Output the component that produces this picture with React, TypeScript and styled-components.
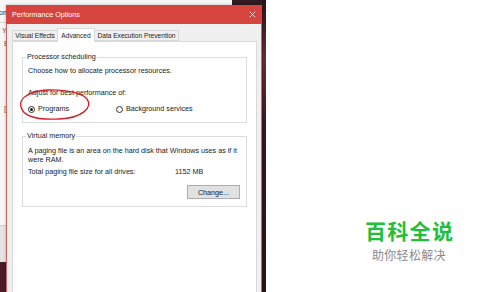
import styled, { createGlobalStyle } from 'styled-components';

const GlobalStyle = createGlobalStyle`
  html, body {
    margin: 0;
    padding: 0;
    background: #ffffff;
  }
  body {
    font-family: "Liberation Sans", Arial, sans-serif;
    -webkit-font-smoothing: antialiased;
  }
`;

const Screen = styled.div`
  display: flex;
  width: 500px;
  height: 292px;
  overflow: hidden;
  background: #ffffff;
`;

const Desktop = styled.div`
  position: relative;
  flex: 0 0 266px;
  height: 292px;
  overflow: hidden;
  background: linear-gradient(180deg, #2e1a20 0%, #5a2430 30%, #3a1820 60%, #4d1c28 100%);
`;

const BackWindow = styled.div`
  position: absolute;
  left: 0;
  top: 0;
  width: 232px;
  height: 262px;
  display: flex;
  flex-direction: column;
  background: #f7f7f7;
  font-size: 7px;
  color: #333;
`;

const BackHeader = styled.div`
  height: 23px;
  border-bottom: 1px solid #d6d6d6;
  padding: 9px 0 0 0;
  box-sizing: border-box;
  margin-left: -1px;
`;

const BackBody = styled.div`
  flex: 1;
  display: flex;
  flex-direction: column;
  gap: 5px;
  padding: 4px 0 0 2px;
  color: #555;
  font-size: 7px;
  line-height: 8px;
`;

const BackFooter = styled.div`
  height: 36px;
  background: #e4e4e4;
  border-top: 1px solid #cfcfcf;
`;

const Dialog = styled.div`
  position: absolute;
  left: 6px;
  top: 5px;
  width: 256px;
  height: 300px;
  box-sizing: border-box;
  display: flex;
  flex-direction: column;
  background: #f0f0f0;
  border: 1px solid #c96863;
  border-top: none;
  box-shadow: 0 0 3px rgba(0, 0, 0, 0.25);
`;

const TitleBar = styled.div`
  height: 19px;
  flex: 0 0 19px;
  margin: 0 -1px;
  display: flex;
  align-items: center;
  justify-content: space-between;
  padding: 0 5px 0 6px;
  background: #d5443f;
  color: #ffffff;
  font-size: 7.2px;
`;

const CloseIcon = styled.svg`
  width: 7px;
  height: 7px;
  margin-right: 1px;
`;

const DialogBody = styled.div`
  flex: 1;
  display: flex;
  flex-direction: column;
  padding: 4px 4px 0 5px;
`;

const TabRow = styled.div`
  display: flex;
  align-items: flex-end;
  height: 13px;
  position: relative;
  z-index: 1;
`;

const Tab = styled.div<{ $active?: boolean; $w: number }>`
  width: ${({ $w }) => $w}px;
  height: ${({ $active }) => ($active ? 14 : 11)}px;
  box-sizing: border-box;
  display: flex;
  align-items: center;
  justify-content: center;
  font-size: 6.6px;
  color: #1a1a1a;
  background: ${({ $active }) => ($active ? '#ffffff' : '#f0f0f0')};
  border: 1px solid #d9d9d9;
  border-bottom: ${({ $active }) => ($active ? 'none' : '1px solid #d9d9d9')};
  margin-bottom: ${({ $active }) => ($active ? -1 : 0)}px;
  & + & {
    margin-left: -1px;
  }
`;

const TabPage = styled.div`
  flex: 1;
  background: #ffffff;
  border: 1px solid #d9d9d9;
  padding: 10px 9px 0 9px;
  display: flex;
  flex-direction: column;
  gap: 8px;
`;

const GroupBox = styled.fieldset`
  margin: 0;
  padding: 0 6px 0 5px;
  border: 1px solid #dcdcdc;
  min-width: 0;
  font-size: 7.2px;
  color: #1a1a1a;
`;

const Legend = styled.legend`
  padding: 0 1px;
  margin-left: -2px;
  line-height: 10px;
  font-size: 7.2px;
  color: #1a1a1a;
`;

const Line = styled.div<{ $top?: number }>`
  line-height: 10px;
  margin-top: ${({ $top }) => $top ?? 0}px;
  white-space: nowrap;
`;

const Para = styled.div<{ $top?: number }>`
  line-height: 9px;
  margin-top: ${({ $top }) => $top ?? 0}px;
`;

const RadioRow = styled.div`
  position: relative;
  display: flex;
  align-items: center;
  height: 10px;
  margin-top: 6px;
  margin-bottom: 8px;
`;

const RadioOption = styled.label<{ $w?: number }>`
  display: flex;
  align-items: center;
  gap: 3px;
  width: ${({ $w }) => ($w ? `${$w}px` : 'auto')};
  line-height: 10px;
`;

const RadioCircle = styled.span<{ $checked?: boolean }>`
  width: 7px;
  height: 7px;
  box-sizing: border-box;
  border-radius: 50%;
  border: 1px solid #333333;
  display: flex;
  align-items: center;
  justify-content: center;
  &::after {
    content: '';
    width: 3px;
    height: 3px;
    border-radius: 50%;
    background: ${({ $checked }) => ($checked ? '#1a1a1a' : 'transparent')};
  }
`;

const Scribble = styled.svg`
  position: absolute;
  left: -11px;
  top: -15px;
  width: 80px;
  height: 34px;
  overflow: visible;
  pointer-events: none;
`;

const SizeRow = styled.div`
  display: flex;
  line-height: 10px;
  margin-top: 3px;
`;

const SizeLabel = styled.span`
  width: 147px;
`;

const ButtonRow = styled.div`
  display: flex;
  justify-content: flex-end;
  margin-top: 8px;
  margin-bottom: 7px;
`;

const Button = styled.div`
  width: 53px;
  height: 14px;
  box-sizing: border-box;
  display: flex;
  align-items: center;
  justify-content: center;
  background: #e1e1e1;
  border: 1px solid #adadad;
  font-size: 7.2px;
  color: #1a1a1a;
`;

const Edge = styled.div`
  position: absolute;
  right: 0;
  top: 0;
  width: 4px;
  height: 292px;
  background: linear-gradient(180deg, #2a1418 0%, #6b2a35 20%, #3a151c 45%, #2c1217 100%);
`;

const RightArea = styled.div`
  flex: 1;
  display: flex;
  flex-direction: column;
  padding: 219px 0 0 99px;
  background: #ffffff;
`;

const Brand = styled.div`
  font-family: "Noto Sans CJK SC", sans-serif;
  font-size: 21px;
  font-weight: 700;
  line-height: 23px;
  letter-spacing: 1.3px;
  color: #1fbf3a;
`;

const Slogan = styled.div`
  font-family: "Noto Sans CJK SC", sans-serif;
  font-size: 12px;
  line-height: 14px;
  margin-top: 6px;
  margin-left: 7px;
  letter-spacing: 0.3px;
  color: #8a8a8a;
`;

export default function App() {
  return (
    <>
      <GlobalStyle />
      <Screen>
        <Desktop>
          <BackWindow>
            <BackHeader>om</BackHeader>
            <BackBody>
              <span>Y</span>
              <span>&nbsp;E</span>
              <span>&nbsp;</span>
              <span>&nbsp;</span>
              <span>&nbsp;</span>
              <span>&nbsp;</span>
              <span>&nbsp;[</span>
            </BackBody>
            <BackFooter />
          </BackWindow>
          <Edge />
          <Dialog>
            <TitleBar>
              <span>Performance Options</span>
              <CloseIcon viewBox="0 0 10 10">
                <path d="M1 1 L9 9 M9 1 L1 9" stroke="#ffffff" strokeWidth="1.1" fill="none" />
              </CloseIcon>
            </TitleBar>
            <DialogBody>
              <TabRow>
                <Tab $w={46}>Visual Effects</Tab>
                <Tab $w={38} $active>
                  Advanced
                </Tab>
                <Tab $w={85}>Data Execution Prevention</Tab>
              </TabRow>
              <TabPage>
                <GroupBox>
                  <Legend>Processor scheduling</Legend>
                  <Line $top={4}>Choose how to allocate processor resources.</Line>
                  <Line $top={12}>Adjust for best performance of:</Line>
                  <RadioRow>
                    <RadioOption $w={88}>
                      <RadioCircle $checked />
                      Programs
                    </RadioOption>
                    <RadioOption>
                      <RadioCircle />
                      Background services
                    </RadioOption>
                    <Scribble viewBox="0 0 80 34">
                      <path
                        d="M16 3 C34 -1 62 1 70 10 C76 18 66 29 42 30 C20 31 6 27 4 18 C2 10 9 5 22 2 C26 1 30 1 33 1"
                        stroke="#d1202b"
                        strokeWidth="1.3"
                        fill="none"
                        strokeLinecap="round"
                      />
                    </Scribble>
                  </RadioRow>
                </GroupBox>
                <GroupBox>
                  <Legend>Virtual memory</Legend>
                  <Para $top={5}>
                    A paging file is an area on the hard disk that Windows uses as if it
                    <br />
                    were RAM.
                  </Para>
                  <SizeRow>
                    <SizeLabel>Total paging file size for all drives:</SizeLabel>
                    <span>1152 MB</span>
                  </SizeRow>
                  <ButtonRow>
                    <Button>Change...</Button>
                  </ButtonRow>
                </GroupBox>
              </TabPage>
            </DialogBody>
          </Dialog>
        </Desktop>
        <RightArea>
          <Brand>百科全说</Brand>
          <Slogan>助你轻松解决</Slogan>
        </RightArea>
      </Screen>
    </>
  );
}
